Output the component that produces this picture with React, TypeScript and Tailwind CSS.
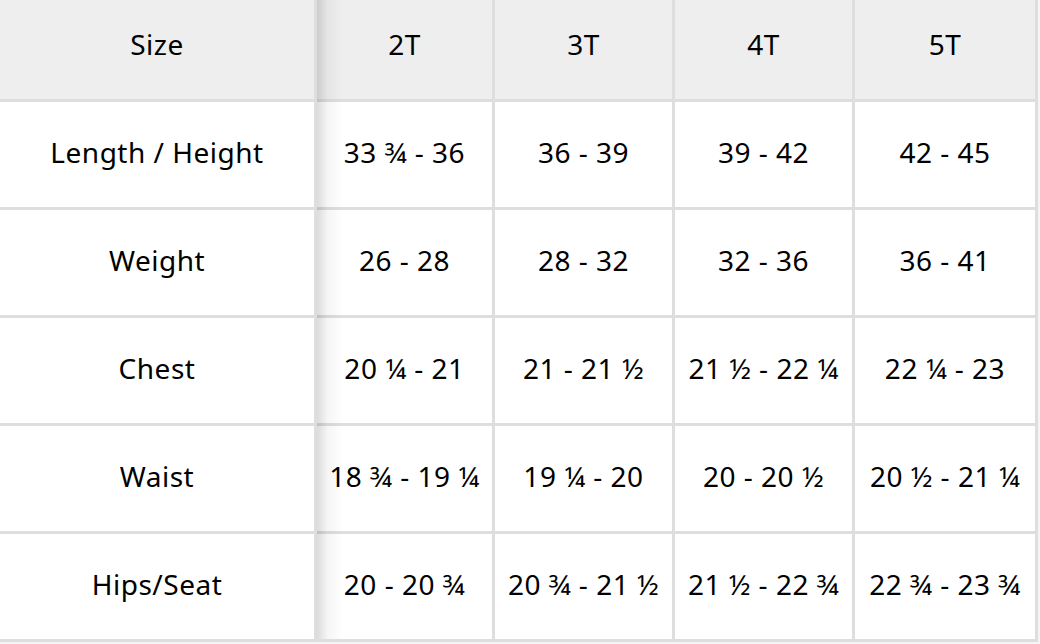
const sizes = ["2T", "3T", "4T", "5T"];

const rows: { label: string; values: string[] }[] = [
  { label: "Length / Height", values: ["33 ¾ - 36", "36 - 39", "39 - 42", "42 - 45"] },
  { label: "Weight", values: ["26 - 28", "28 - 32", "32 - 36", "36 - 41"] },
  { label: "Chest", values: ["20 ¼ - 21", "21 - 21 ½", "21 ½ - 22 ¼", "22 ¼ - 23"] },
  { label: "Waist", values: ["18 ¾ - 19 ¼", "19 ¼ - 20", "20 - 20 ½", "20 ½ - 21 ¼"] },
  { label: "Hips/Seat", values: ["20 - 20 ¾", "20 ¾ - 21 ½", "21 ½ - 22 ¾", "22 ¾ - 23 ¾"] },
];

export default function App() {
  return (
    <div
      className="w-[1040px] h-[644px] bg-[#f5f5f5] overflow-hidden text-black"
      style={{ fontFamily: "'Noto Sans', Lato, sans-serif" }}
    >
      <div className="relative w-[1038px]">
        <div className="grid grid-cols-[314px_175px_177px_177px_180px] grid-rows-[99px_repeat(5,105px)] gap-[3px] bg-[#dedede] pr-[3px] pb-[3px] text-[28px] leading-none tracking-[0.5px]">
          <div className="bg-[#eeeeee] flex items-center justify-center pb-[11px]">Size</div>
          {sizes.map((s) => (
            <div key={s} className="bg-[#eeeeee] flex items-center justify-center pb-[11px]">
              {s}
            </div>
          ))}
          {rows.map((r) => (
            <>
              <div key={r.label} className="bg-white flex items-center justify-center pb-[6px]">
                {r.label}
              </div>
              {r.values.map((v, i) => (
                <div
                  key={r.label + i}
                  className="bg-white flex items-center justify-center whitespace-nowrap pb-[6px]"
                >
                  {v}
                </div>
              ))}
            </>
          ))}
        </div>
        {/* sticky column shadow */}
        <div className="pointer-events-none absolute top-0 bottom-[3px] left-[317px] w-[26px] bg-[linear-gradient(to_right,rgba(0,0,0,0.14),rgba(0,0,0,0.04)_40%,rgba(0,0,0,0))]" />
      </div>
    </div>
  );
}
